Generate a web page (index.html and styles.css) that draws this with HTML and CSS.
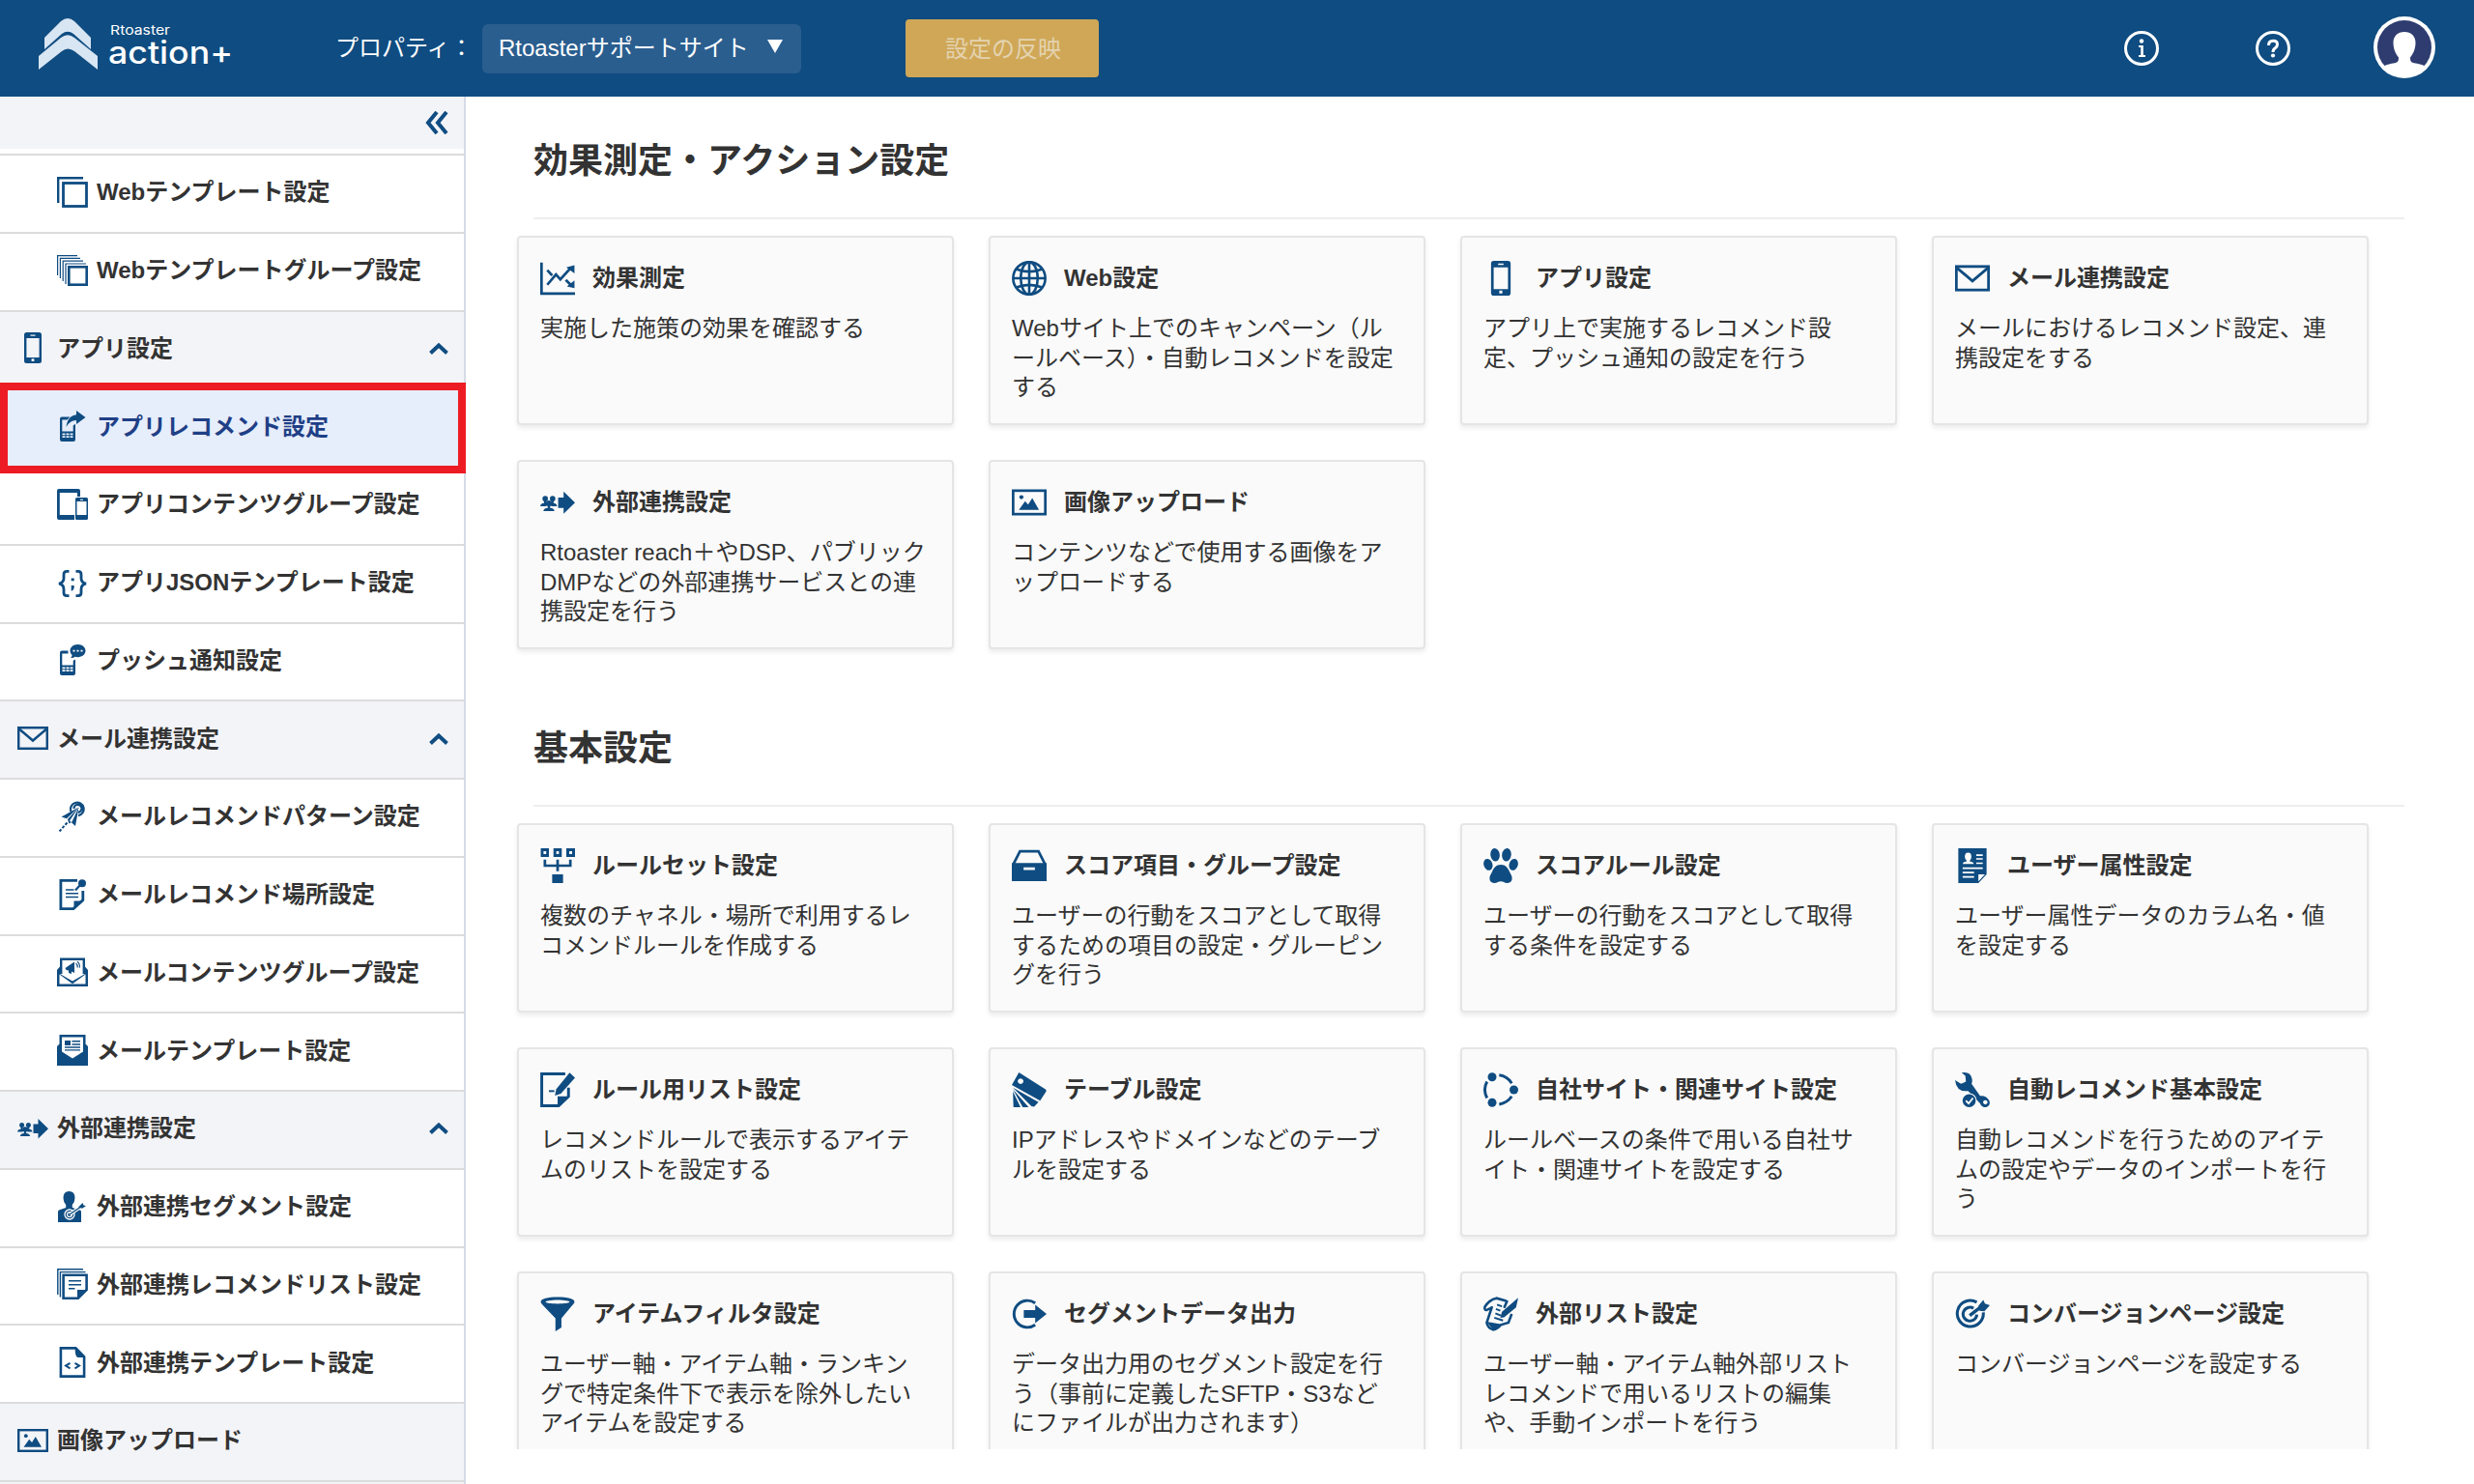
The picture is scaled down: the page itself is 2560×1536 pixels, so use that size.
FILE: index.html
```html
<!DOCTYPE html>
<html lang="ja">
<head>
    <meta charset="UTF-8">
    <meta name="viewport" content="width=device-width, initial-scale=1.0">
    <title>Rtoaster action+</title>
    <link rel="stylesheet" href="styles.css">
</head>
<body>
    <svg class="sprite" xmlns="http://www.w3.org/2000/svg">
        <symbol id="i-layers" viewBox="0 0 32 32">
            <path d="M27 1.2H1.2V27" fill="none" stroke="currentColor" stroke-width="2.4"/>
            <rect x="6.5" y="6.5" width="24" height="24" fill="none" stroke="currentColor" stroke-width="2.8"/>
        </symbol>
        <symbol id="i-layers-many" viewBox="0 0 32 32">
            <path d="M21 .6H.6V21M24 3.4H3.4V24M27 6.2H6.2V27M30 9H9V30" fill="none" stroke="currentColor" stroke-width="1.2"/>
            <rect x="12.3" y="12.3" width="18.4" height="18.4" fill="#fff" stroke="currentColor" stroke-width="2.6"/>
        </symbol>
        <symbol id="i-phone" viewBox="0 0 32 32">
            <path fill-rule="evenodd" d="M9.5 0h13a2.5 2.5 0 0 1 2.500 2.500v27a2.500 2.500 0 0 1-2.500 2.500h-13a2.500 2.500 0 0 1-2.500-2.500v-27A2.500 2.500 0 0 1 9.500 0zM9.400 6v20h13.200V6zM13.500 2.500v1.300h5V2.500zM14.600 27.300v2.600h2.800v-2.600z"/>
        </symbol>
        <symbol id="i-app-recommend" viewBox="0 0 32 32">
            <path fill-rule="evenodd" d="M5 6.500h8.500L10.500 9.500H5.300V21.500h11.400V15.500L19 13.800V30a2 2 0 0 1-2 2H5a2 2 0 0 1-2-2V8.500a2 2 0 0 1 2-2zM5.500 23.500v1.800h3v-1.800zM9.500 23.500v1.800h3v-1.800zM13.500 23.500v1.800h3v-1.800zM5.500 26.300v1.800h3v-1.800zM9.500 26.300v1.800h3v-1.800zM13.500 26.300v1.800h3v-1.800z"/>
            <path d="M20 0l9.500 7-9.500 7v-4C15.500 10.200 12.500 12 9.500 17 10.500 9.500 14 4.800 20 4.300z"/>
        </symbol>
        <symbol id="i-devices" viewBox="0 0 32 32">
            <path fill-rule="evenodd" d="M2 0h20a2 2 0 0 1 2 2v6h-3V4H2.800v23H18v5H2a2 2 0 0 1-2-2V2a2 2 0 0 1 2-2z"/>
            <path fill-rule="evenodd" d="M20.500 9h10A1.500 1.500 0 0 1 32 10.500v20a1.500 1.500 0 0 1-1.500 1.500h-10a1.500 1.500 0 0 1-1.500-1.500v-20A1.500 1.500 0 0 1 20.500 9zM20.500 13v14h10V13zM24 10.700v1h3v-1z"/>
        </symbol>
        <symbol id="i-braces" viewBox="0 0 32 32">
            <g fill="none" stroke="currentColor" stroke-width="2.800">
                <path d="M12.500 4.400H10Q7 4.400 7 7.500v4Q7 16 2 17.200 7 18 7 23v3.500Q7 29.600 10 29.600h2.500"/>
                <path d="M19.500 4.400H22q3 0 3 3.100v4q0 4.500 5 5.700-5 .8-5 5.800v3.500q0 3.100-3 3.100h-2.500"/>
            </g>
            <path d="M14.700 11.500h3v2.800h-3zM14.700 19h3v2.800l-1.700 2.700h-1.300z"/>
        </symbol>
        <symbol id="i-push" viewBox="0 0 32 32">
            <path fill-rule="evenodd" d="M5 6.500h6.500v3H5.300V21.500h11.400V16.800l2.300-1.300V30a2 2 0 0 1-2 2H5a2 2 0 0 1-2-2V8.500a2 2 0 0 1 2-2zM5.500 23.500v1.800h3v-1.800zM9.500 23.500v1.800h3v-1.800zM13.500 23.500v1.800h3v-1.800zM5.500 26.300v1.800h3v-1.800zM9.500 26.300v1.800h3v-1.800zM13.500 26.300v1.800h3v-1.800z"/>
            <path fill-rule="evenodd" d="M21.500 0c4.600 0 8 2.900 8 6.600s-3.400 6.600-8 6.600c-1 0-2-.1-2.800-.4-1.200.9-2.700 1.400-4.700 1.300 1-.9 1.500-2 1.600-3.100-1.300-1.200-2.100-2.700-2.100-4.400C13.500 2.900 16.900 0 21.500 0zM16.500 5.800v1.800h2V5.800zM20.500 5.800v1.800h2V5.800zM24.500 5.800v1.800h2V5.800z"/>
        </symbol>
        <symbol id="i-mail" viewBox="0 0 32 32">
            <g fill="none" stroke="currentColor" stroke-width="2.500">
                <rect x="1.200" y="5.200" width="29.600" height="21.600"/>
                <path d="M1.800 6.500L16 18.500 30.200 6.500"/>
            </g>
        </symbol>
        <symbol id="i-mail-pattern" viewBox="0 0 32 32">
            <path d="M14.500 11A6.800 6.800 0 1 1 22 15.200M17.500 8a4 4 0 1 1 4.500 3.800" fill="none" stroke="currentColor" stroke-width="2.200"/>
            <path d="M22.500 6.500L4.500 16.500l5.500 1.800zM22.500 6.500L19 26l-6-5.500zM22.500 6.500L11 19l1.500 4.500 3-2z"/>
            <path d="M10.500 22.500L2.500 31.500" fill="none" stroke="currentColor" stroke-width="2" stroke-dasharray="3 1.600"/>
        </symbol>
        <symbol id="i-note-pin" viewBox="0 0 32 32">
            <path d="M21 1.400H3.900v29.200H17l9.800-9V12" fill="none" stroke="currentColor" stroke-width="2.800"/>
            <path d="M17.500 31v-8.500H27z"/>
            <path d="M9 11h8.500M9 14.800h13M9 18.500h13" fill="none" stroke="currentColor" stroke-width="1.500"/>
            <circle cx="26" cy="4.200" r="4"/>
            <path d="M24 6L19 11.500" stroke="currentColor" stroke-width="2.200"/>
        </symbol>
        <symbol id="i-mail-promo" viewBox="0 0 32 32">
            <path d="M4.200 18V2.700h23.600V18" fill="none" stroke="currentColor" stroke-width="2.400"/>
            <path d="M3 10.500L0 14v17h32V14l-3-3.500V18L16 25.500 3 18zM2.500 18.500L15.200 27.800q.8.400 1.600 0L29.500 18.500V28.600h-27z" fill-rule="evenodd"/>
            <path d="M8.500 12L18 5.500v11.500l-3-1.500v2.500l-3-1v-2.500l-2.500-.5z"/>
            <path d="M19.500 7q2 1.500 1.700 4.500M21 5.200q3 2.300 2.300 6.500" fill="none" stroke="currentColor" stroke-width="1.100"/>
        </symbol>
        <symbol id="i-mail-template" viewBox="0 0 32 32">
            <path fill-rule="evenodd" d="M2.500 0h27v9.500L32 12v20H0V12l2.500-2.500zM5 2.500V17.500L16 24.500 27 17.500V2.500z"/>
            <path d="M8 6h6v5H8zM15.500 6H24v1.500h-8.500zM15.500 9.200H24v1.500h-8.500zM8 12.200h16v1.500H8zM8 15.200h16v1.300H8z"/>
        </symbol>
        <symbol id="i-external" viewBox="0 0 32 32">
            <path d="M16.500 11.500h5V6L32 16.300 21.500 26.500V21h-5z"/>
            <circle cx="4.600" cy="12.600" r="2.500"/>
            <circle cx="11.400" cy="12.600" r="2.500"/>
            <path d="M0 19.500q.2-2.500 3.500-2.800V14h2.200v3l1.500.8-2 1.700zM15.500 19.500q-.2-2.500-3.200-2.800V14h-2.200v3l-1.500.8 2 1.700z"/>
            <circle cx="8" cy="17" r="2.700"/>
            <path d="M2.900 24q.2-2.700 4-3v-2h2.200v2q3.800.3 4 3z"/>
        </symbol>
        <symbol id="i-segment" viewBox="0 0 32 32">
            <path d="M12.500 0q6 0 6 7 0 4-2.700 7v3L24 19.500q1 .5 1 2V32H1V21.500q0-1.500 1-2l7.200-2.500v-3Q6.500 11 6.500 7q0-7 6-7z"/>
            <circle cx="13" cy="24" r="5" fill="none" stroke="#fff" stroke-width="1.300"/>
            <circle cx="13" cy="24" r="2.500" fill="none" stroke="#fff" stroke-width="1.200"/>
            <path d="M13 24L27 14.500" stroke="#fff" stroke-width="3.600"/>
            <path d="M13 24L27 14.500" stroke="currentColor" stroke-width="1.500"/>
            <path d="M22 16.500l4.500-4.500 1 2.500 2.500.8-4 2.500z"/>
        </symbol>
        <symbol id="i-ext-list" viewBox="0 0 32 32">
            <path d="M27 .8H.8V27M29.500 3.600H3.400V29.500" fill="none" stroke="currentColor" stroke-width="1.400"/>
            <path d="M6.600 6.800h24V22l-8.800 8.700H6.600z" fill="#fff" stroke="currentColor" stroke-width="2.600"/>
            <path d="M21 31.500V22h10.500z"/>
            <path d="M12 12.800h13M12 16.800h13M12 20.800h6.500" fill="none" stroke="currentColor" stroke-width="1.400"/>
        </symbol>
        <symbol id="i-ext-template" viewBox="0 0 32 32">
            <path d="M3.900 1.400h15.500l8.700 8.800v20.400H3.900z" fill="none" stroke="currentColor" stroke-width="2.600"/>
            <path d="M18.500 1l9.500 10h-6.500q-2-1-2.500-4z"/>
            <path d="M13.500 16.800L9 19.600l4.500 2.800M18.500 16.800l4.500 2.800-4.500 2.800" fill="none" stroke="currentColor" stroke-width="2"/>
        </symbol>
        <symbol id="i-image" viewBox="0 0 32 32">
            <rect x="1.200" y="5.200" width="29.600" height="21.600" fill="none" stroke="currentColor" stroke-width="2.400"/>
            <circle cx="8.800" cy="11.200" r="1.900"/>
            <path d="M6.500 22.800l5.700-8 2.800 3.200 3.800-6L25 22.800z"/>
        </symbol>
        <symbol id="i-chart" viewBox="0 0 32 32">
            <g fill="none" stroke="currentColor" stroke-width="2.400">
                <path d="M1.200 1.500v28.600H32"/>
                <path d="M6.500 22L14.500 12.500l4 4.500L28 6.500M6.500 8.500L11 13.500M23.500 17.500L28 22"/>
            </g>
            <path d="M31.500 4v7.500L24 6zM31.500 25v-7L24.500 23.500z"/>
        </symbol>
        <symbol id="i-globe" viewBox="0 0 32 32">
            <g fill="none" stroke="currentColor" stroke-width="2.300">
                <circle cx="16" cy="16" r="14.800"/>
                <ellipse cx="16" cy="16" rx="7.800" ry="14.800"/>
                <path d="M16 1v30M1 16h30M4 7.500q12 4.800 24 0M4 24.500q12-4.800 24 0"/>
            </g>
        </symbol>
        <symbol id="i-ruleset" viewBox="0 0 32 32">
            <path fill-rule="evenodd" d="M.5 0H8v8H.5zM3 2.600v2.800h2.500V2.600zM12.200 0h7.600v8h-7.600zM14.800 2.600v2.800h2.400V2.600zM24 0h8v8h-8zM26.700 2.600v2.800h2.600V2.600z"/>
            <path d="M4.300 10.500V16h23.400v-5.500M16 10.500V21" fill="none" stroke="currentColor" stroke-width="2.400"/>
            <path d="M11 24h10v8H11z"/>
        </symbol>
        <symbol id="i-drawer" viewBox="0 0 32 32">
            <path d="M1.500 14.500L7.500 2.700h17l6 11.800" fill="none" stroke="currentColor" stroke-width="2.400"/>
            <path fill-rule="evenodd" d="M0 13.500h32v16.800H0zM10.800 17.500v2.500h10.400v-2.500z"/>
        </symbol>
        <symbol id="i-paw" viewBox="0 0 32 32">
            <ellipse cx="10.700" cy="6" rx="4.200" ry="6" transform="rotate(-8 10.700 6)"/>
            <ellipse cx="21.300" cy="6" rx="4.200" ry="6" transform="rotate(8 21.300 6)"/>
            <ellipse cx="4.300" cy="15" rx="4" ry="5.400" transform="rotate(-18 4.300 15)"/>
            <ellipse cx="27.700" cy="15" rx="4" ry="5.400" transform="rotate(18 27.700 15)"/>
            <path d="M16 15c4.500 0 6.500 3 8 6.500 1.200 2.800 2.500 3.800 2.300 6.500-.2 3-2.600 4-4.800 4-2 0-3.300-1.500-5.500-1.500S12.500 32 10.500 32c-2.200 0-4.600-1-4.800-4-.2-2.700 1.100-3.700 2.300-6.500C9.500 18 11.500 15 16 15z"/>
        </symbol>
        <symbol id="i-user-doc" viewBox="0 0 32 32">
            <path d="M3 0h26v24l-7.500 8H3z"/>
            <path fill="#fff" d="M12 4q3 0 3 3.800 0 2-1.300 3.200v1.200q3.300.3 3.500 2.300H7q.2-2 3.500-2.300V11Q9 9.800 9 7.800 9 4 12 4zM19.500 5.500h6V7h-6zM19.500 9h6v1.500h-6zM19.500 13h6v1.500h-6zM7 17.500h18.500V19H7zM7 21.500h10.500V23H7zM7 25.500h10.500V27H7zM21.500 24h6l-6 6.500z"/>
        </symbol>
        <symbol id="i-edit-doc" viewBox="0 0 32 32">
            <path d="M23 1.300H1.400v29.400H17l9-8.500V14" fill="none" stroke="currentColor" stroke-width="2.600"/>
            <path d="M16 31.500V22h11z"/>
            <path d="M27 .3L32 4.800 19 19.500l-5.500 1.800 1.300-6z"/>
            <path d="M8 17.200h5" stroke="currentColor" stroke-width="1.700"/>
        </symbol>
        <symbol id="i-swatch" viewBox="0 0 32 32">
            <path fill-rule="evenodd" d="M6.500 0L31 15.500q1.200 1 .4 2.200L26 26 0 11.500zM8 5.500a2.600 2.600 0 1 0 .1 0z"/>
            <path d="M1 14l23.500 13.300-4 4.200-2.500-.5zM1 15.500L15.500 32H10zM1 17.500L8 32H1.500z"/>
        </symbol>
        <symbol id="i-sites" viewBox="0 0 32 32">
            <circle cx="8" cy="4.200" r="4"/>
            <circle cx="28" cy="16" r="4"/>
            <circle cx="8" cy="27.800" r="4"/>
            <path d="M14.500 2.500Q22 3.500 26 10M26 22q-4 6-11.500 7.300M3.300 8.500q-4 7.500 0 15" fill="none" stroke="currentColor" stroke-width="2.600"/>
        </symbol>
        <symbol id="i-wrench" viewBox="0 0 32 32">
            <path fill-rule="evenodd" d="M0 7l5.500 3.500L10 8.500 9.500 3 6 .3q8-1.500 9.500 5.200.7 3-.3 5l7.800 11q6-.5 8.500 4.500 1.500 4.500-3 6-4 .5-5.500-3.500L12 17Q1.500 18.500 0 7zM27.800 25.500a2 2 0 1 0 .1 0z"/>
            <circle cx="13" cy="26" r="7" fill="#fafafa"/>
            <circle cx="13" cy="26" r="6"/>
            <path d="M10 26l2.500 2.500 4-5" fill="none" stroke="#fff" stroke-width="1.600"/>
        </symbol>
        <symbol id="i-funnel" viewBox="0 0 32 32">
            <path fill-rule="evenodd" d="M16 .5c9 0 15.500 1.500 15.500 4.300 0 1-1 2-2 3.200L19.500 20v8.500L14 32V20L2.500 8Q.5 6 .5 4.800C.5 2 7 .5 16 .5zM16 3C9.500 3 5 3.900 5 4.900s4.500 1.700 11 1.700 11-.7 11-1.700S22.500 3 16 3z"/>
        </symbol>
        <symbol id="i-export" viewBox="0 0 32 32">
            <path d="M21.500 6A12.300 12.300 0 1 0 21.500 26" fill="none" stroke="currentColor" stroke-width="2.600"/>
            <path d="M11 12.500h10.500V7.500L32 16l-10.500 8.500v-5H11z"/>
        </symbol>
        <symbol id="i-ext-note" viewBox="0 0 32 32">
            <g fill="none" stroke="currentColor">
                <path d="M21 4L12 1.500Q5 3 1.300 9.500q-.5 3 1.500 3l4-2M8 9L3 24q1 5 6 6.500 4-.5 7-4.500l7-2 3-8M22 3.500l-3 7" stroke-width="2.300"/>
                <path d="M12.500 7.500l4.500 1.500M11.500 11.500l4 1.500M11 15.500l5 2M10 19.500l8 2.500" stroke-width="1.700"/>
            </g>
            <path d="M3 23l14 2.500-7.500 6zM32 1l-2 9-11 9-3.500.5L17 14z"/>
        </symbol>
        <symbol id="i-target" viewBox="0 0 32 32">
            <g fill="none" stroke="currentColor" stroke-width="2.700">
                <path d="M20 5.200A12 12 0 1 0 26 14.500"/>
                <path d="M17 10.800A6.300 6.300 0 1 0 20 16.500"/>
                <path d="M13.500 17.500L25 8.500" stroke-width="3"/>
            </g>
            <path d="M21.500 8.500L26 3l1.500 3.500L32 8l-5 5.500-4.500-.5z"/>
        </symbol>
    </svg>

    <header class="header">
        <svg class="logo" viewBox="0 0 208 60">
            <path class="logo-mark" d="M6 34V22L23 5q7-6 14 0l17 17v12L36 18q-6-4.500-12 0z"/>
            <path class="logo-mark" d="M0 55V41L23 22q7-5.500 14 0l24 19v14L37 36q-7-5-13 0z"/>
            <text class="logo-small" x="74" y="19" textLength="62" lengthAdjust="spacingAndGlyphs">Rtoaster</text>
            <text class="logo-large" x="72" y="49" textLength="129" lengthAdjust="spacingAndGlyphs">action+</text>
        </svg>
        <span class="property-label">プロパティ：</span>
        <div class="property-select"><span>Rtoasterサポートサイト</span><span class="caret"></span></div>
        <button class="apply-button" disabled>設定の反映</button>
        <div class="header-icons">
            <svg class="round-icon" viewBox="0 0 38 38">
                <circle cx="19" cy="19" r="16.500" fill="none" stroke="currentColor" stroke-width="3"/>
                <circle cx="19" cy="11.500" r="2.200"/>
                <path d="M16 16h4.800v10H23v2h-7v-2h2.200v-8H16z"/>
            </svg>
            <svg class="round-icon" viewBox="0 0 38 38">
                <circle cx="19" cy="19" r="16.500" fill="none" stroke="currentColor" stroke-width="3"/>
                <path d="M14.500 16q0-4.700 4.700-4.700 4.300 0 4.300 3.800 0 2.200-2.200 3.700-2.300 1.400-2.300 4.200" fill="none" stroke="currentColor" stroke-width="3"/>
                <circle cx="19" cy="26.500" r="2.100"/>
            </svg>
            <svg class="avatar" viewBox="0 0 64 64">
                <circle cx="32" cy="32" r="32" fill="#fff"/>
                <circle cx="32" cy="32" r="28" fill="#2e3c70"/>
                <path fill="#fff" d="M32 16c7 0 11.500 4.500 11.500 11 0 7-2.500 11.500-5.500 15.500 0 4 1 5 4 5.800 4 .8 8.500 1.200 11 3.200Q44 61 32 61T11 51.500c2.500-2 7-2.400 11-3.200 3-.8 4-1.800 4-5.800-3-4-5.500-8.500-5.500-15.500C20.500 20.500 25 16 32 16z"/>
            </svg>
        </div>
    </header>

    <div class="layout">
        <nav class="sidebar">
            <div class="sidebar-top">
                <svg class="collapse" viewBox="0 0 24 24"><path d="M12 1L3 12l9 11M22 1l-9 11 9 11"/></svg>
            </div>
            <ul class="menu">
                <li class="item"><svg class="icon"><use href="#i-layers"/></svg>Webテンプレート設定</li>
                <li class="item"><svg class="icon"><use href="#i-layers-many"/></svg>Webテンプレートグループ設定</li>
                <li class="item section"><svg class="icon"><use href="#i-phone"/></svg>アプリ設定<svg class="chevron" viewBox="0 0 20 12"><path d="M1.500 10.500L10 2.500l8.500 8"/></svg></li>
                <li class="item active"><svg class="icon"><use href="#i-app-recommend"/></svg>アプリレコメンド設定</li>
                <li class="item"><svg class="icon"><use href="#i-devices"/></svg>アプリコンテンツグループ設定</li>
                <li class="item"><svg class="icon"><use href="#i-braces"/></svg>アプリJSONテンプレート設定</li>
                <li class="item"><svg class="icon"><use href="#i-push"/></svg>プッシュ通知設定</li>
                <li class="item section"><svg class="icon"><use href="#i-mail"/></svg>メール連携設定<svg class="chevron" viewBox="0 0 20 12"><path d="M1.500 10.500L10 2.500l8.500 8"/></svg></li>
                <li class="item"><svg class="icon"><use href="#i-mail-pattern"/></svg>メールレコメンドパターン設定</li>
                <li class="item"><svg class="icon"><use href="#i-note-pin"/></svg>メールレコメンド場所設定</li>
                <li class="item"><svg class="icon"><use href="#i-mail-promo"/></svg>メールコンテンツグループ設定</li>
                <li class="item"><svg class="icon"><use href="#i-mail-template"/></svg>メールテンプレート設定</li>
                <li class="item section"><svg class="icon"><use href="#i-external"/></svg>外部連携設定<svg class="chevron" viewBox="0 0 20 12"><path d="M1.500 10.500L10 2.500l8.500 8"/></svg></li>
                <li class="item"><svg class="icon"><use href="#i-segment"/></svg>外部連携セグメント設定</li>
                <li class="item"><svg class="icon"><use href="#i-ext-list"/></svg>外部連携レコメンドリスト設定</li>
                <li class="item"><svg class="icon"><use href="#i-ext-template"/></svg>外部連携テンプレート設定</li>
                <li class="item section"><svg class="icon"><use href="#i-image"/></svg>画像アップロード</li>
                <li class="item section"></li>
            </ul>
        </nav>

        <main class="content">
            <section class="group">
                <h2>効果測定・アクション設定</h2>
                <div class="cards">
                    <div class="card">
                        <h3><svg class="card-icon"><use href="#i-chart"/></svg>効果測定</h3>
                        <p>実施した施策の効果を確認する</p>
                    </div>
                    <div class="card">
                        <h3><svg class="card-icon"><use href="#i-globe"/></svg>Web設定</h3>
                        <p>Webサイト上でのキャンペーン（ル<br>ールベース）・自動レコメンドを設定<br>する</p>
                    </div>
                    <div class="card">
                        <h3><svg class="card-icon"><use href="#i-phone"/></svg>アプリ設定</h3>
                        <p>アプリ上で実施するレコメンド設<br>定、プッシュ通知の設定を行う</p>
                    </div>
                    <div class="card">
                        <h3><svg class="card-icon"><use href="#i-mail"/></svg>メール連携設定</h3>
                        <p>メールにおけるレコメンド設定、連<br>携設定をする</p>
                    </div>
                    <div class="card">
                        <h3><svg class="card-icon"><use href="#i-external"/></svg>外部連携設定</h3>
                        <p>Rtoaster reach＋やDSP、パブリック<br>DMPなどの外部連携サービスとの連<br>携設定を行う</p>
                    </div>
                    <div class="card">
                        <h3><svg class="card-icon"><use href="#i-image"/></svg>画像アップロード</h3>
                        <p>コンテンツなどで使用する画像をア<br>ップロードする</p>
                    </div>
                </div>
            </section>

            <section class="group">
                <h2>基本設定</h2>
                <div class="cards">
                    <div class="card">
                        <h3><svg class="card-icon"><use href="#i-ruleset"/></svg>ルールセット設定</h3>
                        <p>複数のチャネル・場所で利用するレ<br>コメンドルールを作成する</p>
                    </div>
                    <div class="card">
                        <h3><svg class="card-icon"><use href="#i-drawer"/></svg>スコア項目・グループ設定</h3>
                        <p>ユーザーの行動をスコアとして取得<br>するための項目の設定・グルーピン<br>グを行う</p>
                    </div>
                    <div class="card">
                        <h3><svg class="card-icon"><use href="#i-paw"/></svg>スコアルール設定</h3>
                        <p>ユーザーの行動をスコアとして取得<br>する条件を設定する</p>
                    </div>
                    <div class="card">
                        <h3><svg class="card-icon"><use href="#i-user-doc"/></svg>ユーザー属性設定</h3>
                        <p>ユーザー属性データのカラム名・値<br>を設定する</p>
                    </div>
                    <div class="card">
                        <h3><svg class="card-icon"><use href="#i-edit-doc"/></svg>ルール用リスト設定</h3>
                        <p>レコメンドルールで表示するアイテ<br>ムのリストを設定する</p>
                    </div>
                    <div class="card">
                        <h3><svg class="card-icon"><use href="#i-swatch"/></svg>テーブル設定</h3>
                        <p>IPアドレスやドメインなどのテーブ<br>ルを設定する</p>
                    </div>
                    <div class="card">
                        <h3><svg class="card-icon"><use href="#i-sites"/></svg>自社サイト・関連サイト設定</h3>
                        <p>ルールベースの条件で用いる自社サ<br>イト・関連サイトを設定する</p>
                    </div>
                    <div class="card">
                        <h3><svg class="card-icon"><use href="#i-wrench"/></svg>自動レコメンド基本設定</h3>
                        <p>自動レコメンドを行うためのアイテ<br>ムの設定やデータのインポートを行<br>う</p>
                    </div>
                    <div class="card">
                        <h3><svg class="card-icon"><use href="#i-funnel"/></svg>アイテムフィルタ設定</h3>
                        <p>ユーザー軸・アイテム軸・ランキン<br>グで特定条件下で表示を除外したい<br>アイテムを設定する</p>
                    </div>
                    <div class="card">
                        <h3><svg class="card-icon"><use href="#i-export"/></svg>セグメントデータ出力</h3>
                        <p>データ出力用のセグメント設定を行<br>う（事前に定義したSFTP・S3など<br>にファイルが出力されます）</p>
                    </div>
                    <div class="card">
                        <h3><svg class="card-icon"><use href="#i-ext-note"/></svg>外部リスト設定</h3>
                        <p>ユーザー軸・アイテム軸外部リスト<br>レコメンドで用いるリストの編集<br>や、手動インポートを行う</p>
                    </div>
                    <div class="card">
                        <h3><svg class="card-icon"><use href="#i-target"/></svg>コンバージョンページ設定</h3>
                        <p>コンバージョンページを設定する</p>
                    </div>
                </div>
            </section>
        </main>
    </div>
</body>
</html>
```
FILE: styles.css
```css
* {
    box-sizing: border-box;
}

body {
    margin: 0;
    height: 1536px;
    overflow: hidden;
    font-family: "Liberation Sans", "Noto Sans CJK JP", sans-serif;
    font-size: 24px;
    color: #333;
    background-color: #fff;
}

.sprite {
    display: none;
}

svg {
    fill: currentColor;
    flex-shrink: 0;
}

/* header */
.header {
    display: flex;
    align-items: center;
    height: 100px;
    padding-left: 40px;
    background-color: #0f4c81;
    color: #fff;
}

.logo {
    width: 208px;
    height: 60px;
    margin-right: 99px;
    margin-top: -6px;
}

.logo-mark {
    fill: #d8e5f3;
}

.logo-small,
.logo-large {
    font-family: Inter, sans-serif;
    fill: #fff;
}

.logo-small {
    font-size: 13px;
    font-weight: 400;
}

.logo-large {
    font-size: 32px;
    font-weight: 500;
}

.property-label {
    width: 152px;
    margin-bottom: 6px;
}

.property-select {
    display: flex;
    align-items: center;
    width: 330px;
    height: 51px;
    padding: 0 19px 5px 17px;
    border-radius: 6px;
    background-color: #2a5e8f;
    white-space: nowrap;
}

.caret {
    margin-left: auto;
    border: 8px solid transparent;
    border-top: 14px solid #fff;
    border-bottom: 0;
}

.apply-button {
    width: 200px;
    height: 60px;
    margin-left: 108px;
    padding: 0 0 4px 2px;
    border: none;
    border-radius: 4px;
    background-color: #cfa757;
    color: #e4d3af;
    font: inherit;
}

.header-icons {
    display: flex;
    align-items: center;
    margin-left: auto;
    padding-right: 40px;
}

.round-icon {
    width: 38px;
    height: 38px;
    margin-right: 98px;
}

.avatar {
    width: 64px;
    height: 64px;
    margin-left: -13px;
    margin-top: -2px;
}

/* sidebar */
.layout {
    display: flex;
    height: 1436px;
}

.sidebar {
    width: 482px;
    border-right: 2px solid #d5dbe8;
}

.sidebar-top {
    display: flex;
    align-items: center;
    justify-content: flex-end;
    height: 54px;
    margin-bottom: 5px;
    padding-right: 16px;
    background-color: #f3f4f8;
}

.collapse {
    width: 24px;
    height: 24px;
}

.collapse path,
.chevron path {
    fill: none;
    stroke: #0f4c81;
    stroke-width: 4;
}

.menu {
    margin: 0;
    padding: 0;
    list-style: none;
}

.item {
    display: flex;
    align-items: center;
    height: 80.75px;
    padding: 0 16px 7px 59px;
    border-top: 2px solid #dcdcdc;
    font-weight: 700;
    white-space: nowrap;
}

.icon {
    width: 32px;
    height: 32px;
    margin: 4px 9px 0 0;
    color: #0f4c81;
}

.section {
    padding-left: 18px;
    background-color: #f3f4f8;
}

.chevron {
    width: 20px;
    height: 12px;
    margin: 5px 0 0 auto;
}

.active {
    position: relative;
    background-color: #e6edfb;
    color: #1f3f86;
    border-top-color: #e6edfb;
}

/* frame over the selected item */
.active::after {
    content: "";
    position: absolute;
    inset: -7px -2px -8px 0;
    border: 8px solid #ed1c24;
}

/* content */
.content {
    flex: 1;
    height: 1400px;
    overflow: hidden;
    padding-left: 53px;
}

.group {
    height: 608px;
}

.group h2 {
    height: 127px;
    width: 1936px;
    margin: 0 0 17px 17px;
    padding-top: 40px;
    border-bottom: 2px solid #eee;
    font-size: 36px;
    line-height: 54px;
}

.cards {
    display: grid;
    grid-template-columns: repeat(4, 452px);
    grid-auto-rows: 196px;
    gap: 36px;
}

.card {
    padding: 18px 22px;
    border: 2px solid #e5e5e5;
    border-radius: 4px;
    background-color: #fafafa;
    box-shadow: 0 3px 5px rgba(0, 0, 0, 0.08);
    white-space: nowrap;
}

.card h3 {
    display: flex;
    align-items: center;
    height: 46px;
    margin: 0 0 15px;
    padding-bottom: 3px;
    font-size: 24px;
}

.card-icon {
    width: 36px;
    height: 36px;
    margin: 4px 18px 0 0;
    color: #0f4c81;
}

.card p {
    margin: 0;
    line-height: 30.7px;
}
```
